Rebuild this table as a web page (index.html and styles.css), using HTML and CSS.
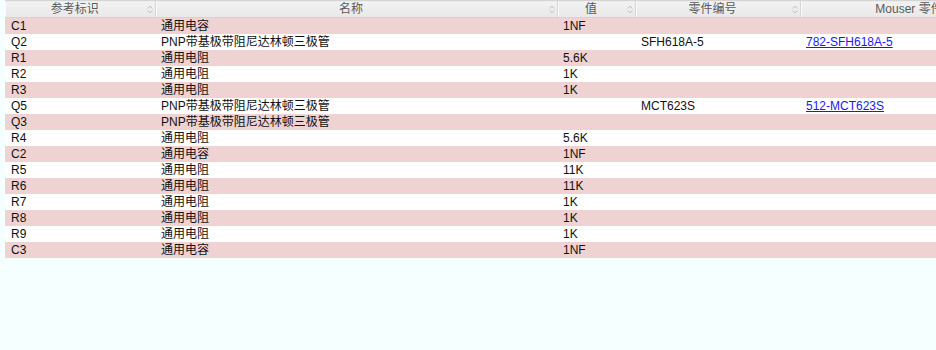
FILE: index.html
```html
<!DOCTYPE html>
<html lang="zh">
<head>
<meta charset="utf-8">
<title>BOM</title>
<link rel="stylesheet" href="styles.css">
</head>
<body>
<div class="wrap">
<table class="bom">
  <colgroup>
    <col class="c-ref"><col class="c-name"><col class="c-val"><col class="c-part"><col class="c-mouser">
  </colgroup>
  <thead>
    <tr>
      <th><span class="lbl">参考标识</span><svg class="sort" viewBox="0 0 6 9"><path d="M0.8 3.4 L3 1.2 L5.2 3.4 M0.8 5.6 L3 7.8 L5.2 5.6"/></svg></th>
      <th><span class="lbl">名称</span><svg class="sort" viewBox="0 0 6 9"><path d="M0.8 3.4 L3 1.2 L5.2 3.4 M0.8 5.6 L3 7.8 L5.2 5.6"/></svg></th>
      <th><span class="lbl">值</span><svg class="sort" viewBox="0 0 6 9"><path d="M0.8 3.4 L3 1.2 L5.2 3.4 M0.8 5.6 L3 7.8 L5.2 5.6"/></svg></th>
      <th><span class="lbl">零件编号</span><svg class="sort" viewBox="0 0 6 9"><path d="M0.8 3.4 L3 1.2 L5.2 3.4 M0.8 5.6 L3 7.8 L5.2 5.6"/></svg></th>
      <th><span class="lbl">Mouser 零件编号</span><svg class="sort" viewBox="0 0 6 9"><path d="M0.8 3.4 L3 1.2 L5.2 3.4 M0.8 5.6 L3 7.8 L5.2 5.6"/></svg></th>
    </tr>
  </thead>
  <tbody>
    <tr><td>C1</td><td>通用电容</td><td>1NF</td><td></td><td></td></tr>
    <tr><td>Q2</td><td>PNP带基极带阻尼达林顿三极管</td><td></td><td>SFH618A-5</td><td><a href="#">782-SFH618A-5</a></td></tr>
    <tr><td>R1</td><td>通用电阻</td><td>5.6K</td><td></td><td></td></tr>
    <tr><td>R2</td><td>通用电阻</td><td>1K</td><td></td><td></td></tr>
    <tr><td>R3</td><td>通用电阻</td><td>1K</td><td></td><td></td></tr>
    <tr><td>Q5</td><td>PNP带基极带阻尼达林顿三极管</td><td></td><td>MCT623S</td><td><a href="#">512-MCT623S</a></td></tr>
    <tr><td>Q3</td><td>PNP带基极带阻尼达林顿三极管</td><td></td><td></td><td></td></tr>
    <tr><td>R4</td><td>通用电阻</td><td>5.6K</td><td></td><td></td></tr>
    <tr><td>C2</td><td>通用电容</td><td>1NF</td><td></td><td></td></tr>
    <tr><td>R5</td><td>通用电阻</td><td>11K</td><td></td><td></td></tr>
    <tr><td>R6</td><td>通用电阻</td><td>11K</td><td></td><td></td></tr>
    <tr><td>R7</td><td>通用电阻</td><td>1K</td><td></td><td></td></tr>
    <tr><td>R8</td><td>通用电阻</td><td>1K</td><td></td><td></td></tr>
    <tr><td>R9</td><td>通用电阻</td><td>1K</td><td></td><td></td></tr>
    <tr><td>C3</td><td>通用电容</td><td>1NF</td><td></td><td></td></tr>
  </tbody>
</table>
</div>
</body>
</html>
```
FILE: styles.css
```css
html, body {
  margin: 0;
  padding: 0;
  background: #f5ffff;
  overflow: hidden;
}
body {
  font-family: "Liberation Sans", Arial, "Noto Sans CJK SC", sans-serif;
  font-size: 12px;
  color: #111;
}
.wrap {
  padding-left: 5px;
  width: 1200px;
}
.bom {
  border-collapse: collapse;
  table-layout: fixed;
  width: 1047px;
}
.c-ref { width: 150px; }
.c-name { width: 402px; }
.c-val { width: 78px; }
.c-part { width: 165px; }
.c-mouser { width: 252px; }

.bom th {
  position: relative;
  height: 16px;
  padding: 0 10px 0 0;
  font-weight: normal;
  color: #5a5a5a;
  line-height: 16px;
  text-align: center;
  background: linear-gradient(#f2f2f2, #e8e8e8);
  border-top: 1px solid #d4d4d4;
  border-bottom: 1px solid #d4d4d4;
  border-right: 1px solid #d6d6d6;
  box-shadow: inset 1px 0 0 #fafafa;
  white-space: nowrap;
  overflow: hidden;
}
.sort {
  position: absolute;
  right: 2px;
  top: 4px;
  width: 6px;
  height: 9px;
  fill: none;
  stroke: #b8b8b8;
  stroke-width: 1;
}
.bom td {
  height: 16px;
  padding: 0 0 0 6px;
  line-height: 16px;
  white-space: nowrap;
  overflow: hidden;
}
.bom tbody tr:nth-child(odd) td {
  background: #efd3d3;
}
.bom tbody tr:nth-child(even) td {
  background: #ffffff;
}
.bom a {
  color: #1a1aee;
  text-decoration: underline;
}
```
